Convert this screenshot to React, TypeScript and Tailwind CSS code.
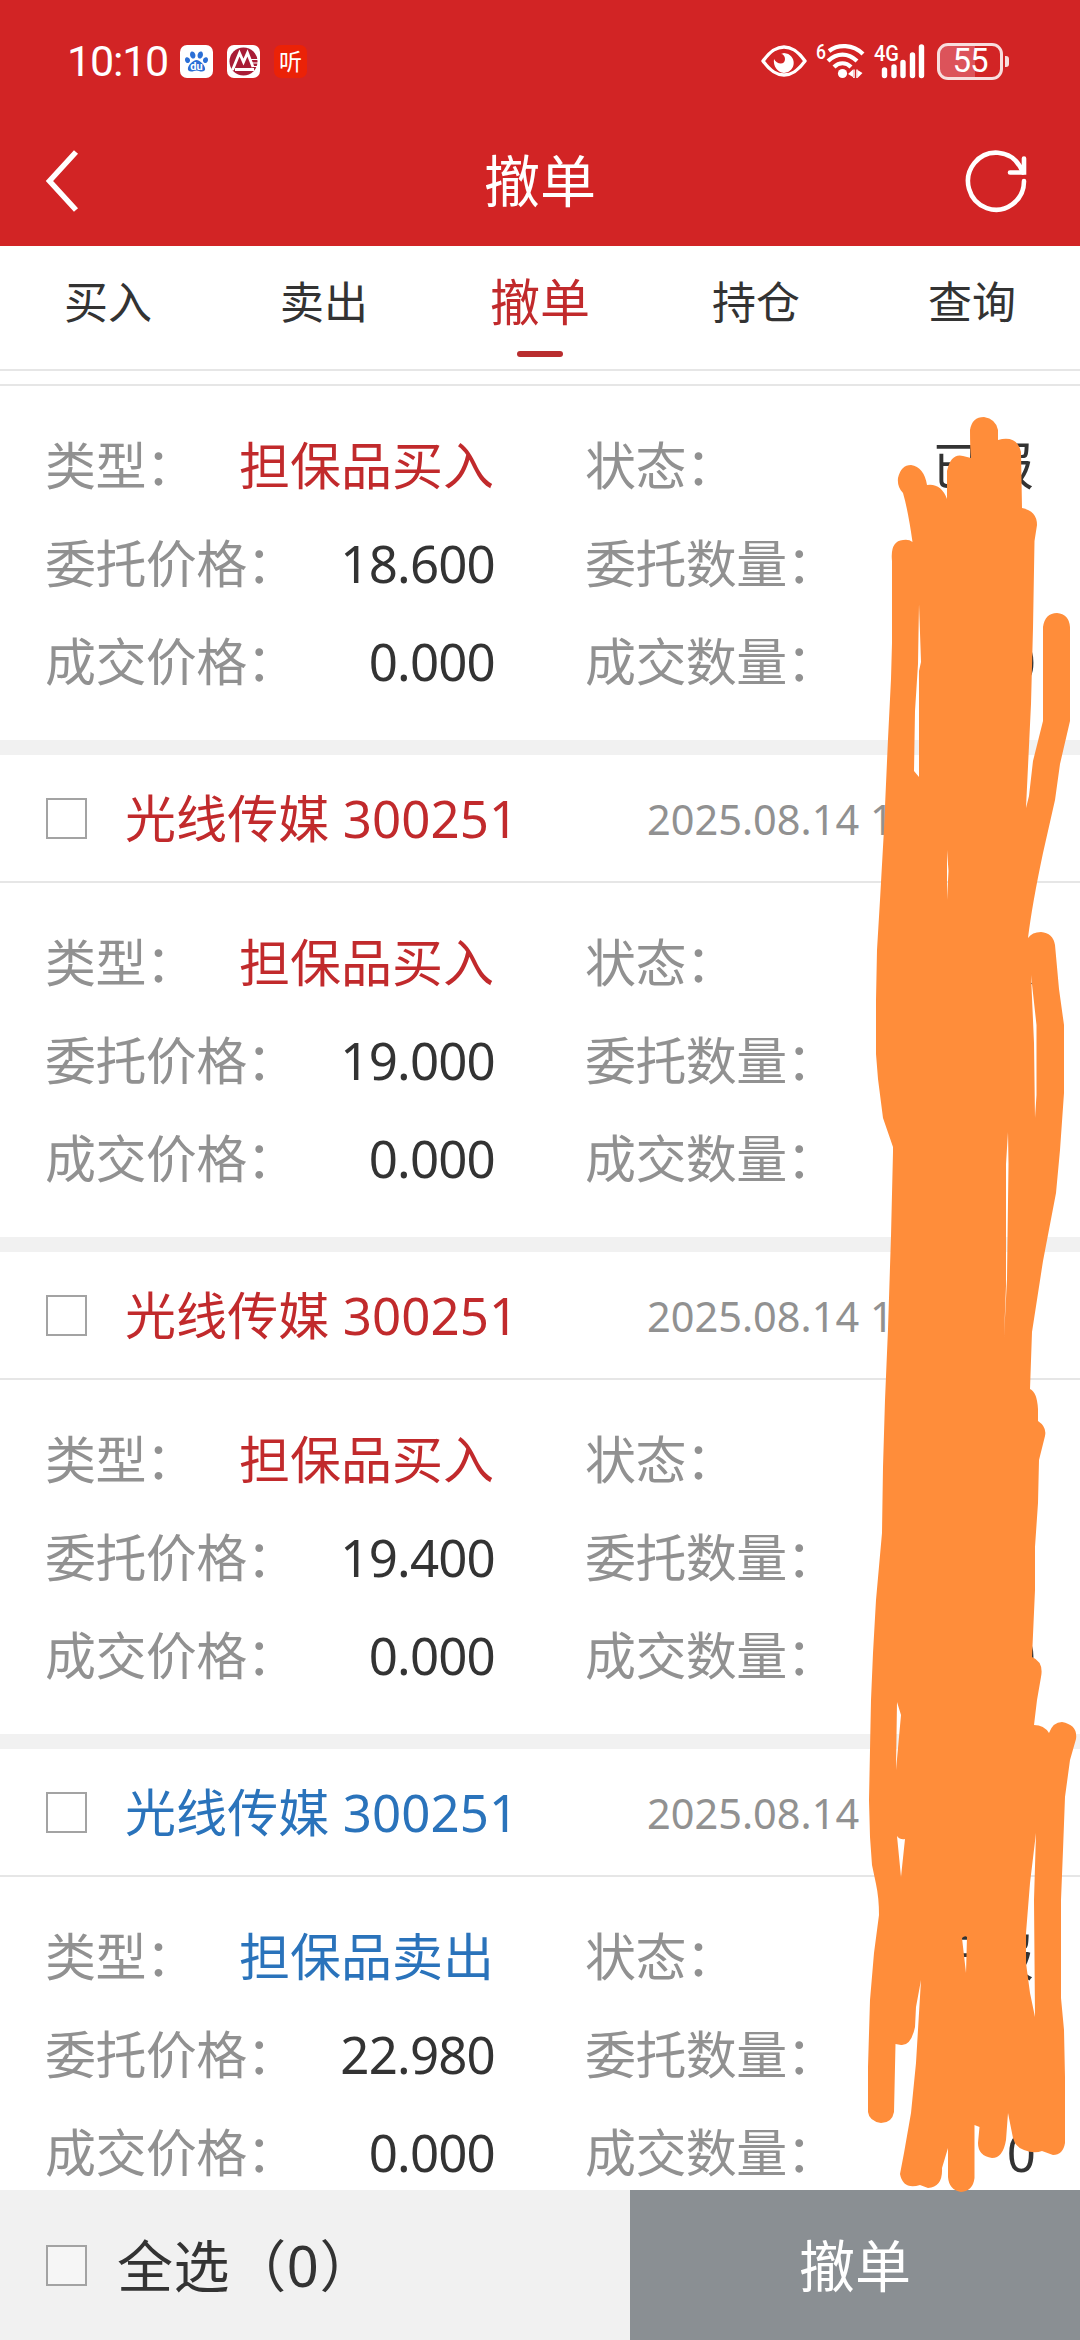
import React from 'react';
import { FaPaw } from 'react-icons/fa';

interface Order {
  side: 'buy' | 'sell';
  time: string;
  status: string;
  price: string;
  dealPrice: string;
  amount: string;
  dealAmount: string;
}

const STOCK = '光线传媒 300251';

const TABS = ['买入', '卖出', '撤单', '持仓', '查询'];

const ORDERS: Order[] = [
  { side: 'buy', time: '', status: '已报', price: '18.600', dealPrice: '0.000', amount: '', dealAmount: '0' },
  { side: 'buy', time: '2025.08.14 1', status: '已报', price: '19.000', dealPrice: '0.000', amount: '', dealAmount: '' },
  { side: 'buy', time: '2025.08.14 1', status: '已报', price: '19.400', dealPrice: '0.000', amount: '', dealAmount: '0' },
  { side: 'sell', time: '2025.08.14', status: '已报', price: '22.980', dealPrice: '0.000', amount: '', dealAmount: '0' },
];

const StatusBar: React.FC = () => (
  <div className="flex h-[122px] items-center justify-between pl-[67px] pr-[71px] text-white">
    <div className="flex items-center">
      <span className="w-[113px] font-[Roboto] text-[43px] leading-[50px] tracking-[-1.2px]">10:10</span>
      <span className="relative flex h-[33px] w-[33px] items-center justify-center rounded-[7px] bg-white">
        <FaPaw className="h-[25px] w-[23px] text-[#2b6fd6]" />
        <span className="absolute top-[16px] font-[Roboto] text-[11px] font-bold leading-[12px] text-white">du</span>
      </span>
      <svg className="ml-[14px] h-[33px] w-[33px]" viewBox="0 0 33 33">
        <rect width="33" height="33" rx="7" fill="#fff" />
        <circle cx="16.5" cy="16.5" r="14" fill="#a81d36" />
        <path d="M5.500 25 L12.500 8 L16.500 17 L20.500 8 L26 22 M8 24.500 H27" fill="none" stroke="#fff" strokeWidth="2.800" />
        <path d="M24 14.500 H31 M25 18 H31 M26 21.500 H31" stroke="#fff" strokeWidth="1.200" />
      </svg>
      <span className="ml-[14px] flex h-[33px] w-[33px] items-center justify-center rounded-[7px] bg-[#eb2207] text-[23px] leading-[33px]">
        听
      </span>
    </div>
    <div className="flex items-center">
      <svg className="h-[34px] w-[46px]" viewBox="0 0 46 34" fill="none">
        <path d="M2 17 C10 6 16 3 23 3 C30 3 36 6 44 17 C36 28 30 31 23 31 C16 31 10 28 2 17 Z" stroke="#fff" strokeWidth="3.400" strokeLinejoin="round" />
        <path d="M23 9 C36 10 36 28 23 29 C16 28 12 22 13 15 C15 20 24 22 24 15 C24 12 22 10 20 10 Z" fill="#fff" />
      </svg>
      <svg className="ml-[9px] h-[38px] w-[50px] overflow-visible" viewBox="0 0 50 38" fill="none" stroke="#fff">
        <text x="0" y="17" fill="#fff" stroke="none" fontFamily="Roboto" fontWeight="500" fontSize="21" textLength="10" lengthAdjust="spacingAndGlyphs">6</text>
        <path d="M13 9 C22 2 37 2 47 12" strokeWidth="4.200" />
        <path d="M12 19 C21 10.500 32 10.500 41 19" strokeWidth="4.200" />
        <path d="M18 25 C23 20 30 20 35 25" strokeWidth="4.200" />
        <circle cx="26.500" cy="31.500" r="4.600" fill="#fff" stroke="none" />
        <path d="M32 32 L37 27.500 V36 H38.500 M46.500 31 L41.500 36 V28" fill="#fff" stroke="none" />
        <path d="M38 27.500 V36 M41 27.500 V36" strokeWidth="1.500" />
      </svg>
      <svg className="ml-[8px] h-[38px] w-[52px] overflow-visible" viewBox="0 0 52 38" fill="none" stroke="#fff" strokeLinecap="round">
        <text x="0" y="19" fill="#fff" stroke="none" fontFamily="Roboto" fontWeight="500" fontSize="22" textLength="25" lengthAdjust="spacingAndGlyphs">4G</text>
        <path d="M10.500 28 V33.500 M20 25 V33.500 M29 20.500 V33.500 M38.500 13 V33.500 M47.500 5 V33.500" strokeWidth="5.400" />
      </svg>
      <div className="ml-[11px] flex h-[37px] w-[66px] items-center justify-center rounded-[11px] border-[3px] border-[#f8dede] bg-linear-to-r from-[#dc535a] from-58% to-[#d22425] to-58%">
        <span className="font-[Roboto] text-[33px] leading-[34px] tracking-[-1px]">55</span>
      </div>
      <span className="ml-[2px] h-[11px] w-[4px] rounded-r-[3px] bg-[#f8dede]" />
    </div>
  </div>
);

const Checkbox: React.FC = () => <span className="h-[41px] w-[41px] shrink-0 border-2 border-[#a3a3a3] bg-white/40" />;

interface FieldProps {
  label: string;
  value: string;
  valueClass?: string;
}

const Field: React.FC<FieldProps> = ({ label, value, valueClass = 'text-[#333]' }) => (
  <div className="flex h-[98px] w-1/2 items-center justify-between pl-[45px] pr-[46px] text-[51px]">
    <span className="whitespace-nowrap tracking-[-0.6px] text-[#919191]">{label}：</span>
    <span className={`whitespace-nowrap ${valueClass}`}>{value}</span>
  </div>
);

const OrderCard: React.FC<{ order: Order; showHeader: boolean }> = ({ order, showHeader }) => {
  const color = order.side === 'buy' ? 'text-[#c12a2c]' : 'text-[#2a73bb]';
  const number = 'text-[#333] tracking-[-0.8px] -mr-[1px]';

  return (
    <section className="shrink-0 bg-white">
      {showHeader && (
        <div className="flex h-[128px] items-center border-b-2 border-[#e6e6e6] pl-[46px]">
          <Checkbox />
          <span className={`ml-[38px] w-[522px] whitespace-nowrap text-[51px] tracking-[0.1px] ${color}`}>{STOCK}</span>
          <span className="whitespace-nowrap pt-[3px] text-[41.5px] text-[#919191]">{order.time}</span>
        </div>
      )}
      <div className="flex h-[354px] flex-wrap content-start pt-[30px]">
        <Field label="类型" value={order.side === 'buy' ? '担保品买入' : '担保品卖出'} valueClass={color} />
        <Field label="状态" value={order.status} />
        <Field label="委托价格" value={order.price} valueClass={number} />
        <Field label="委托数量" value={order.amount} valueClass={number} />
        <Field label="成交价格" value={order.dealPrice} valueClass={number} />
        <Field label="成交数量" value={order.dealAmount} valueClass={number} />
      </div>
    </section>
  );
};

// Marker strokes over the right column, with the slits left between them
const MARKER_OUTLINE =
  'M892 561 Q890 541 903 540 Q909 539 912.500 542 Q908 510 903 493 Q897 487 898 478 Q901 465 911 465 Q924 467 927 485 Q941 483 947 499 V471 Q951 453 963 456 L971 458 Q970 448 970 430 Q972 417 984 417 Q996 419 998 430 V440 Q1017 435 1021 452 L1022 508 Q1037 511 1037 525 L1034.500 541 L1033 628 L1031 704 L1026 808 L1029 796 L1033 761 L1043 721 V627 Q1045 613 1057 613 Q1069 614 1070 627 V721 L1060 764 L1055 800 L1043 853 Q1032 905 1028 938 Q1032 932 1041 932 Q1053 933 1055 945 L1059 989 L1064 1025 V1093 L1060 1150 L1056 1193 L1043 1261 L1032 1332 L1030 1389 Q1037 1392 1038 1409 V1421 Q1047 1427 1045 1436 L1039 1460 L1038 1503 L1035 1547 V1590 L1032 1657 Q1044 1662 1041 1677 L1037 1700 L1034 1725 Q1044 1725 1049 1733 Q1053 1722 1062 1722 Q1078 1725 1076 1739 L1070 1760 L1065 1797 L1063 1850 L1061 1900 V1998 L1064 2030 L1065 2077 V2143 Q1063 2155 1053 2155 L1042 2151 Q1034 2154 1024 2150 Q1015 2147 1013 2138 L1008 2113 L1006 2140 Q1003 2158 992 2158 Q978 2156 978 2143 L979.500 2127 L974.500 2125 V2178 Q973 2191 961 2192 Q949 2190 948 2177 V2148 L942 2168 Q943 2187 928 2188 L920 2185 Q903 2190 900 2174 L904 2153 L911 2113 L916 2063 L921 1980 L916 2007 L915 2027 Q911 2046 901 2045 L895.500 2044 L894 2112 Q892 2123 881 2123 Q869 2121 868 2112 V2067 L870 2000 L874 1953 L879 1915 Q879 1898 876 1884 L872 1865 L870 1837 L869 1800 L871 1700 L873 1653 L876 1600 L882 1533 L883 1467 L885 1400 L888 1329 L891 1236 L893 1152 V1147 L883 1118 L878 1079 L876 1054 V1000 L877 950 L880 900 L884 829 L888 739 L891 679 L892 643 Z';

const MARKER_SLITS = [
  'M919 604 L921 662 L919 671 V777 L914 771 L915 711 L918 664 Z',
  'M947 850 L948.500 871 L947 900 Z',
  'M1031 975 L1036.500 1025 V1095 L1035 1118 L1034 1043 Z',
  'M1008 1132 L1008.500 1164 L1007 1279 L1004 1337 L1006 1286 V1164 Z',
  'M897 1702 L901 1715 L896 1770 Z',
  'M897 1836 Q900 1840 905 1839 L901 1877 Z',
  'M1036 1833 L1034 1900 L1035 2017 L1030 1993 L1026 1963 V1933 L1030 1883 Z',
  'M962 1938 Q965 1935 967 1937 L966 1973 Z',
].join(' ');

const App: React.FC = () => (
  <div className="relative flex h-[2340px] w-[1080px] flex-col overflow-hidden bg-white font-['Noto_Sans','Noto_Sans_CJK_SC',sans-serif] leading-none text-[#333]">
    <header className="h-[246px] shrink-0 bg-[#d22425]">
      <StatusBar />
      <div className="flex h-[118px] items-center justify-between pl-[44px] pr-[52px] text-white">
        <svg className="h-[64px] w-[72px]" viewBox="0 0 72 64" fill="none">
          <path d="M32 3 L5.500 32 L32 61" stroke="#fff" strokeWidth="5.500" />
        </svg>
        <h1 className="pb-[2px] text-[56px]">撤单</h1>
        <svg className="h-[64px] w-[64px]" viewBox="0 0 64 64" fill="none" stroke="#fff" strokeWidth="4.600" strokeLinecap="round">
          <path d="M60 32 A28 28.500 0 1 1 56 17.500 L59 23.500" />
          <path d="M60 9.500 V23.500 H46" />
        </svg>
      </div>
    </header>

    <nav className="flex h-[125px] shrink-0 border-b-2 border-[#e6e6e6]">
      {TABS.map((tab, i) => (
        <div key={tab} className="flex w-[216px] flex-col items-center">
          <div className={`flex h-[105px] items-center pt-[7px] ${i === 2 ? 'text-[50px] text-[#c12a2c]' : 'text-[44px]'}`}>
            {tab}
          </div>
          {i === 2 && <span className="h-[6px] w-[46px] rounded-full bg-[#b92d2f]" />}
        </div>
      ))}
    </nav>

    <main className="flex min-h-0 flex-1 flex-col gap-[15px] overflow-hidden bg-[#f1f1f1]">
      {ORDERS.map((order, i) => (
        <div key={i} className={i === 0 ? 'shrink-0 bg-white pt-[13px]' : 'shrink-0'}>
          {i === 0 && <div className="h-[2px] bg-[#e6e6e6]" />}
          <OrderCard order={order} showHeader={i > 0} />
        </div>
      ))}
    </main>

    <footer className="flex h-[150px] shrink-0">
      <div className="flex w-[630px] items-center bg-[#f1f1f1] pl-[46px]">
        <Checkbox />
        <span className="ml-[30px] whitespace-nowrap text-[56px] tracking-[0.6px]">全选（0）</span>
      </div>
      <button className="flex-1 bg-[#8a8f93] text-[56px] text-white">撤单</button>
    </footer>

    <svg className="pointer-events-none absolute inset-0 h-full w-full" viewBox="0 0 1080 2340">
      <path d={`${MARKER_OUTLINE} ${MARKER_SLITS}`} fill="#ff8d3a" fillRule="evenodd" />
    </svg>
  </div>
);

export default App;
